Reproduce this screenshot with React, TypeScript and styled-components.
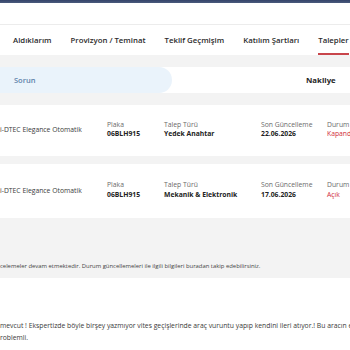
import React from "react";
import styled, { createGlobalStyle } from "styled-components";

const GlobalStyle = createGlobalStyle`
  html, body {
    margin: 0;
    padding: 0;
    background: #f3f3f3;
    font-family: "Open Sans", "Noto Sans", sans-serif;
    overflow: hidden;
  }
`;

const Page = styled.div`
  width: 350px;
  height: 350px;
  overflow: hidden;
  display: flex;
  flex-direction: column;
  background: #f3f3f3;
`;

const TopBar = styled.div`
  height: 3px;
  background: linear-gradient(#34436a, #4a5a7c);
  flex-shrink: 0;
`;

const Header = styled.div`
  height: 21px;
  background: #fff;
  border-bottom: 1px solid #ececec;
  flex-shrink: 0;
`;

const Tabs = styled.div`
  height: 30px;
  background: #fff;
  display: flex;
  align-items: stretch;
  gap: 19px;
  padding-left: 13px;
  white-space: nowrap;
  flex-shrink: 0;
`;

const Tab = styled.div<{ $active?: boolean }>`
  display: flex;
  align-items: center;
  font-size: 7.8px;
  font-weight: 600;
  color: #2b2b2b;
  padding-top: 1px;
  flex-shrink: 0;
  border-bottom: 2px solid ${(p) => (p.$active ? "#c8454b" : "transparent")};
  box-sizing: border-box;
`;

const SorunRow = styled.div`
  margin-top: 12px;
  height: 26px;
  background: #fff;
  display: flex;
  align-items: center;
  flex-shrink: 0;
`;

const Pill = styled.div`
  width: 172px;
  height: 100%;
  background: #eaf3fb;
  border-radius: 0 13px 13px 0;
  display: flex;
  align-items: center;
  padding-left: 14px;
  box-sizing: border-box;
  font-size: 7.5px;
  font-weight: 600;
  color: #5d81aa;
`;

const Nakliye = styled.div`
  margin-left: 134px;
  font-size: 7.8px;
  font-weight: 700;
  color: #1f1f1f;
`;

const Card = styled.div<{ $gap: number; $h: number }>`
  margin-top: ${(p) => p.$gap}px;
  height: ${(p) => p.$h}px;
  background: #fff;
  display: flex;
  align-items: center;
  white-space: nowrap;
  flex-shrink: 0;
`;

const Vehicle = styled.div`
  width: 107px;
  flex-shrink: 0;
  font-size: 6.8px;
  color: #3a3a3a;
  margin-top: -2px;
`;

const Field = styled.div<{ $w: number }>`
  width: ${(p) => p.$w}px;
  flex-shrink: 0;
  display: flex;
  flex-direction: column;
  line-height: 9.5px;
  margin-top: -3px;
`;

const Label = styled.span`
  font-size: 6.8px;
  color: #6a6a6a;
`;

const Value = styled.span<{ $red?: boolean }>`
  font-size: 6.8px;
  font-weight: ${(p) => (p.$red ? 400 : 700)};
  color: ${(p) => (p.$red ? "#d12d3c" : "#222")};
`;

const InfoBand = styled.div`
  height: 60px;
  display: flex;
  align-items: flex-end;
  padding-bottom: 8px;
  box-sizing: border-box;
  font-size: 5.9px;
  color: #444;
  white-space: nowrap;
  flex-shrink: 0;
`;

const Bottom = styled.div`
  flex: 1;
  background: #fff;
  padding-top: 42px;
  font-size: 6.8px;
  line-height: 12px;
  color: #3a3a3a;
  white-space: nowrap;
`;

type Row = {
  type: string;
  date: string;
  status: string;
  gap: number;
  h: number;
};

const rows: Row[] = [
  { type: "Yedek Anahtar", date: "22.06.2026", status: "Kapandı", gap: 12, h: 51 },
  { type: "Mekanik & Elektronik", date: "17.06.2026", status: "Açık", gap: 8, h: 54 },
];

export default function App() {
  return (
    <Page>
      <GlobalStyle />
      <TopBar />
      <Header />
      <Tabs>
        <Tab>Aldıklarım</Tab>
        <Tab>Provizyon / Teminat</Tab>
        <Tab>Teklif Geçmişim</Tab>
        <Tab>Katılım Şartları</Tab>
        <Tab $active>Talepler</Tab>
      </Tabs>
      <SorunRow>
        <Pill>Sorun</Pill>
        <Nakliye>Nakliye</Nakliye>
      </SorunRow>
      {rows.map((r) => (
        <Card key={r.date} $gap={r.gap} $h={r.h}>
          <Vehicle>i-DTEC Elegance Otomatik</Vehicle>
          <Field $w={57}>
            <Label>Plaka</Label>
            <Value>06BLH915</Value>
          </Field>
          <Field $w={97}>
            <Label>Talep Türü</Label>
            <Value>{r.type}</Value>
          </Field>
          <Field $w={66}>
            <Label>Son Güncelleme</Label>
            <Value>{r.date}</Value>
          </Field>
          <Field $w={60}>
            <Label>Durum</Label>
            <Value $red>{r.status}</Value>
          </Field>
        </Card>
      ))}
      <InfoBand>
        celemeler devam etmektedir. Durum güncellemeleri ile ilgili bilgileri buradan takip edebilirsiniz.
      </InfoBand>
      <Bottom>
        mevcut ! Ekspertizde böyle birşey yazmıyor vites geçişlerinde araç vuruntu yapıp kendini ileri atıyor.! Bu aracın ekspertizi
        <br />
        roblemli.
      </Bottom>
    </Page>
  );
}
